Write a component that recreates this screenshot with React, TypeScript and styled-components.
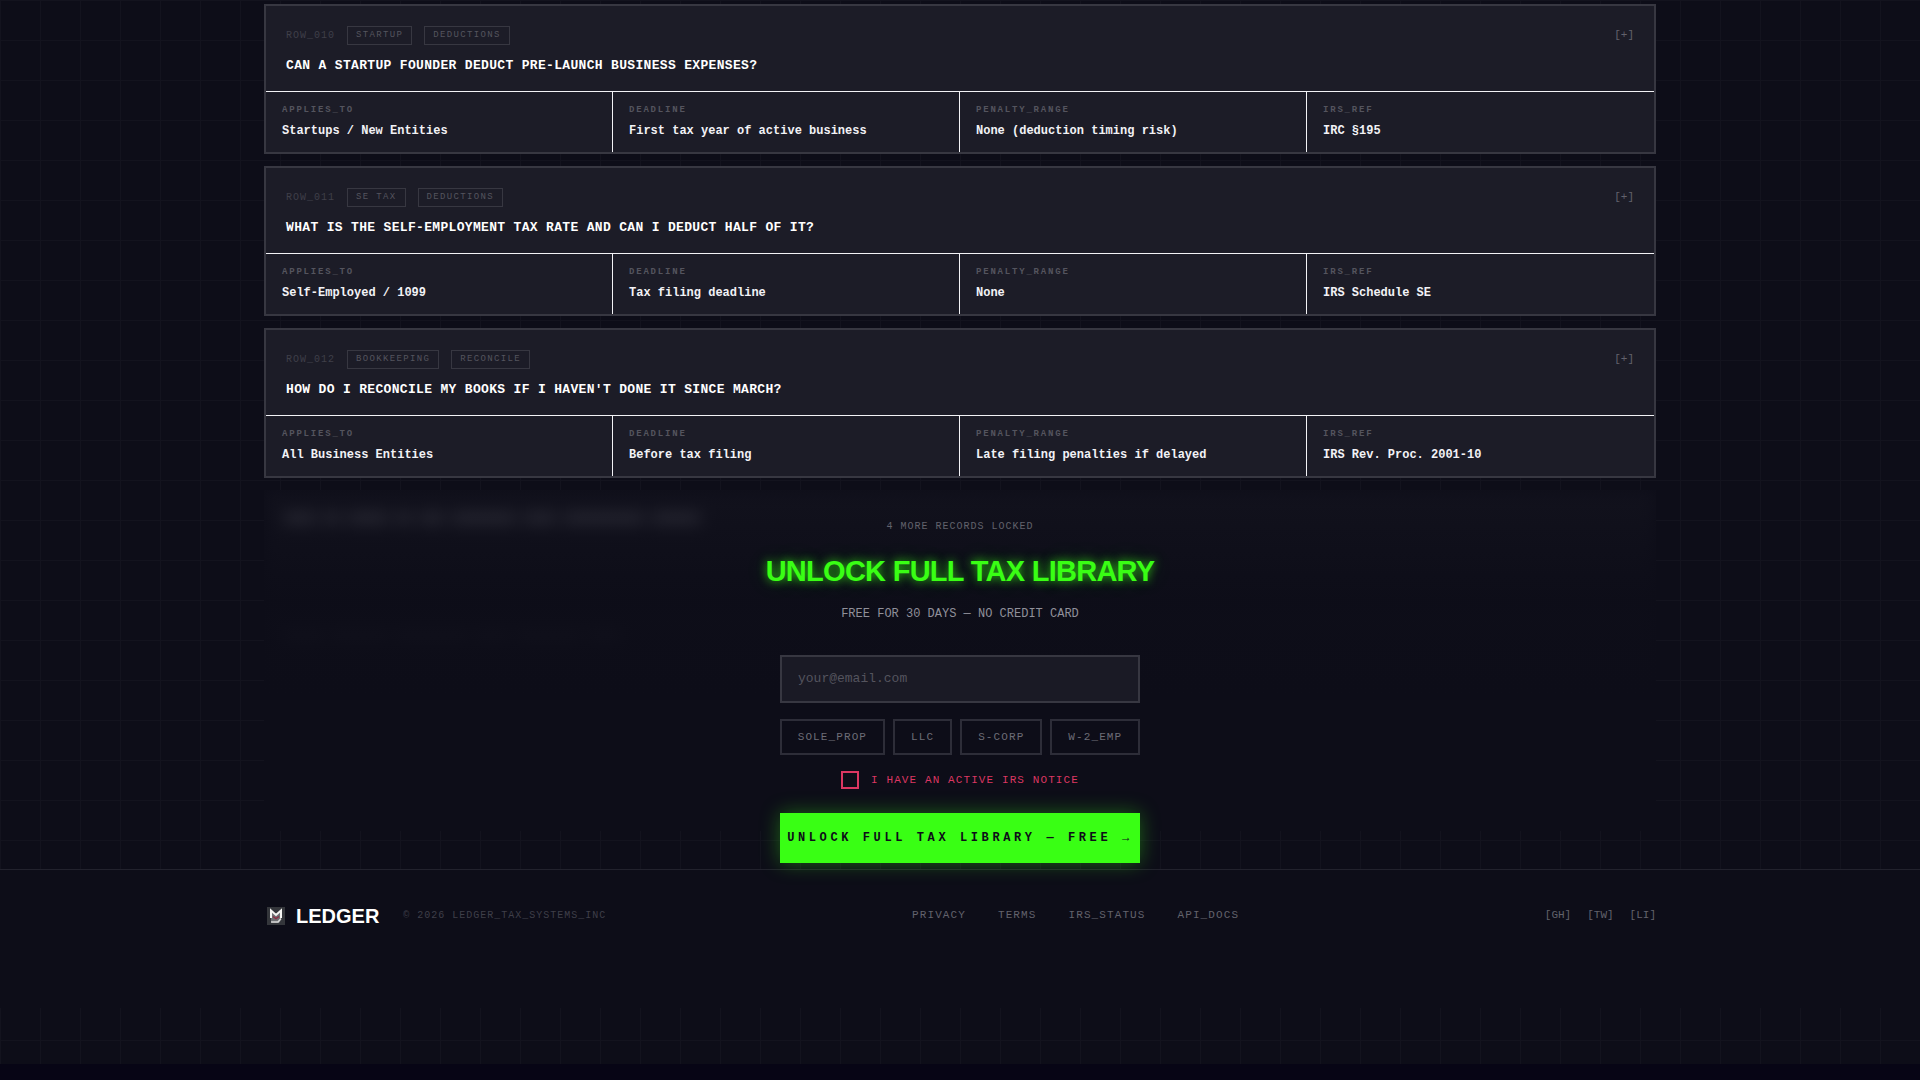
import React from "react";
import styled, { createGlobalStyle } from "styled-components";

const mono = `"Liberation Mono", "Courier New", monospace`;
const sans = `"Liberation Sans", Arial, sans-serif`;

const color = {
  void: "#070515",
  base: "#0d0d18",
  card: "#1c1c27",
  line: "#373741",
  grid: "#13131e",
  rule: "#22222d",
  dim: "#3f3f49",
  muted: "#54545e",
  soft: "#62626c",
  text: "#f2f2f6",
  green: "#39ff14",
  pink: "#dc3762",
};

const GlobalStyle = createGlobalStyle`
  *, *::before, *::after { box-sizing: border-box; }
  body {
    margin: 0;
    background: ${color.void};
    color: ${color.text};
    font-family: ${mono};
  }
  button, input { font-family: inherit; }
  h1, h2, h3, p, dl, dd { margin: 0; }
`;

const Page = styled.div`
  padding: 4px 0 56px;
  background-color: ${color.base};
  background-image: linear-gradient(${color.grid} 1px, transparent 1px),
    linear-gradient(90deg, ${color.grid} 1px, transparent 1px);
  background-size: 40px 40px;
`;

const Container = styled.div`
  width: 100%;
  max-width: 1440px;
  margin: 0 auto;
  padding: 0 24px;
`;

const Records = styled.main`
  display: flex;
  flex-direction: column;
  gap: 12px;
`;

const Card = styled.article`
  border: 2px solid ${color.line};
  background: ${color.card};
`;

const CardHead = styled.header`
  display: flex;
  flex-direction: column;
  gap: 12px;
  padding: 20px 20px 16px;
  border-bottom: 1px solid ${color.text};
`;

const MetaRow = styled.div`
  display: flex;
  align-items: center;
  gap: 12px;
`;

const RowId = styled.span`
  color: ${color.dim};
  font-size: 10px;
  letter-spacing: 0.1em;
`;

const Tag = styled.span`
  padding: 2px 8px;
  border: 1px solid ${color.line};
  color: ${color.muted};
  font-size: 9px;
  line-height: 13px;
  letter-spacing: 0.15em;
`;

const Toggle = styled.button`
  margin-left: auto;
  padding: 0 0 2px;
  border: 0;
  background: none;
  color: ${color.soft};
  font-size: 11px;
  line-height: 16px;
  cursor: pointer;
`;

const Question = styled.h3`
  color: #fff;
  font-size: 13px;
  font-weight: 700;
  line-height: 18px;
  letter-spacing: 0.025em;
`;

const Facts = styled.dl`
  display: grid;
  grid-template-columns: repeat(4, 1fr);
`;

const Fact = styled.div`
  display: flex;
  flex-direction: column;
  gap: 6px;
  padding: 12px 16px;
  border-right: 1px solid ${color.text};

  &:last-child {
    border-right: 0;
  }
`;

const FactLabel = styled.dt`
  color: ${color.muted};
  font-size: 9px;
  font-weight: 700;
  line-height: 12px;
  letter-spacing: 0.2em;
`;

const FactValue = styled.dd`
  font-size: 12px;
  font-weight: 700;
  line-height: 18px;
`;

const Gate = styled.section`
  position: relative;
`;

const LockedStack = styled.div`
  position: absolute;
  inset: 0 0 38px;
  display: flex;
  flex-direction: column;
  gap: 12px;
  overflow: hidden;
  background: ${color.base};
  pointer-events: none;
`;

const LockedRow = styled.div`
  flex: 1;
  display: flex;
  gap: 8px;
  padding: 24px 20px;
  background: ${color.card};
  filter: blur(8px);
`;

const LockedWord = styled.span<{ $chars: number }>`
  width: ${({ $chars }) => $chars * 8}px;
  height: 10px;
  background: #8a8a94;
`;

const Fade = styled.div`
  position: absolute;
  inset: 0;
  background: linear-gradient(rgba(13, 13, 24, 0.7), rgba(13, 13, 24, 0.94) 26%, ${color.base} 60%);
`;

const Offer = styled.form`
  position: relative;
  display: flex;
  flex-direction: column;
  align-items: center;
  width: 100%;
  max-width: 400px;
  margin: 0 auto;
  padding: 28px 20px 6px;
`;

const LockedCount = styled.p`
  color: ${color.soft};
  font-size: 10px;
  line-height: 18px;
  letter-spacing: 0.1em;
`;

const OfferTitle = styled.h2`
  margin-top: 14px;
  color: ${color.green};
  font-family: ${sans};
  font-size: 29px;
  font-weight: 700;
  line-height: 42px;
  letter-spacing: -0.025em;
  white-space: nowrap;
  text-shadow: 0 0 10px rgba(57, 255, 20, 0.8), 0 0 24px rgba(57, 255, 20, 0.2);
`;

const OfferNote = styled.p`
  margin-top: 13px;
  color: #90909a;
  font-size: 12px;
  line-height: 18px;
`;

const EmailInput = styled.input`
  width: 100%;
  height: 48px;
  margin-top: 32px;
  padding: 0 16px 2px;
  border: 2px solid ${color.line};
  border-radius: 0;
  background: #1a1a25;
  color: ${color.text};
  font-size: 13px;
  outline: none;

  &::placeholder {
    color: ${color.muted};
    opacity: 1;
  }
`;

const Entities = styled.div`
  display: flex;
  justify-content: center;
  gap: 8px;
  width: 100%;
  margin-top: 16px;
`;

const EntityButton = styled.button`
  height: 36px;
  padding: 0 16px;
  border: 2px solid #2d2d38;
  background: transparent;
  color: #6c6c76;
  font-size: 11px;
  letter-spacing: 0.1em;
  white-space: nowrap;
  cursor: pointer;
`;

const Notice = styled.label`
  display: flex;
  align-items: center;
  gap: 12px;
  margin-top: 16px;
  color: ${color.pink};
  font-size: 11px;
  line-height: 18px;
  letter-spacing: 0.1em;
  cursor: pointer;
`;

const NoticeBox = styled.input`
  appearance: none;
  width: 18px;
  height: 18px;
  margin: 0;
  border: 2px solid ${color.pink};

  &:checked {
    background: ${color.pink};
  }
`;

const Submit = styled.button`
  width: 100%;
  height: 50px;
  margin-top: 24px;
  padding: 0;
  border: 0;
  background: ${color.green};
  box-shadow: 0 0 20px rgba(57, 255, 20, 0.35);
  color: ${color.base};
  font-size: 12px;
  font-weight: 700;
  letter-spacing: 0.3em;
  white-space: nowrap;
  cursor: pointer;
`;

const Footer = styled.footer`
  padding: 31px 0 79px;
  border-top: 1px solid ${color.rule};
  background: ${color.base};
`;

const FooterRow = styled(Container)`
  display: flex;
  align-items: center;
  justify-content: space-between;
`;

const Brand = styled.div`
  display: flex;
  align-items: center;
  gap: 24px;
`;

const Logo = styled.a`
  display: flex;
  align-items: center;
  gap: 8px;
  padding-top: 2px;
  color: #fff;
  font-family: ${sans};
  font-size: 20px;
  font-weight: 700;
  line-height: 26px;
  text-decoration: none;
`;

const Copyright = styled.span`
  color: ${color.dim};
  font-size: 10px;
  letter-spacing: 0.1em;
`;

const LinkRow = styled.nav<{ $gap: number; $tracking: string }>`
  display: flex;
  gap: ${({ $gap }) => $gap}px;
  font-size: 11px;
  letter-spacing: ${({ $tracking }) => $tracking};
`;

const FooterLink = styled.a`
  color: ${color.soft};
  text-decoration: none;
`;

const LogoMark = () => (
  <svg width="24" height="24" viewBox="0 0 24 24" aria-hidden="true">
    <rect x="3" y="3" width="18" height="18" fill="#34363b" />
    <path d="M7 9h10v7l-2 3H8l-1-2z" fill="#6d6f73" />
    <path d="M7 14V6.500L12 11l5-4.500V14" fill="none" stroke="#f4f4f2" strokeWidth="2" />
    <path d="M9 12.500l3 2 3-2" fill="none" stroke="#8e2e45" strokeWidth="1.500" />
    <path d="M7 18h7l3-3.500" fill="none" stroke="#d9d9d9" strokeWidth="1.500" />
  </svg>
);

const records = [
  {
    id: "ROW_010",
    tags: ["STARTUP", "DEDUCTIONS"],
    question: "CAN A STARTUP FOUNDER DEDUCT PRE-LAUNCH BUSINESS EXPENSES?",
    facts: ["Startups / New Entities", "First tax year of active business", "None (deduction timing risk)", "IRC §195"],
  },
  {
    id: "ROW_011",
    tags: ["SE TAX", "DEDUCTIONS"],
    question: "WHAT IS THE SELF-EMPLOYMENT TAX RATE AND CAN I DEDUCT HALF OF IT?",
    facts: ["Self-Employed / 1099", "Tax filing deadline", "None", "IRS Schedule SE"],
  },
  {
    id: "ROW_012",
    tags: ["BOOKKEEPING", "RECONCILE"],
    question: "HOW DO I RECONCILE MY BOOKS IF I HAVEN'T DONE IT SINCE MARCH?",
    facts: ["All Business Entities", "Before tax filing", "Late filing penalties if delayed", "IRS Rev. Proc. 2001-10"],
  },
];

const factLabels = ["APPLIES_TO", "DEADLINE", "PENALTY_RANGE", "IRS_REF"];
const lockedRows = [
  [4, 2, 5, 2, 3, 8, 4, 10, 6],
  [5, 7, 9, 4, 8, 4],
  [7, 4, 8, 6],
];

export default function App() {
  return (
    <>
      <GlobalStyle />
      <Page>
        <Container>
          <Records>
            {records.map((record) => (
              <Card key={record.id}>
                <CardHead>
                  <MetaRow>
                    <RowId>{record.id}</RowId>
                    {record.tags.map((tag) => (
                      <Tag key={tag}>{tag}</Tag>
                    ))}
                    <Toggle type="button">[+]</Toggle>
                  </MetaRow>
                  <Question>{record.question}</Question>
                </CardHead>
                <Facts>
                  {record.facts.map((value, i) => (
                    <Fact key={factLabels[i]}>
                      <FactLabel>{factLabels[i]}</FactLabel>
                      <FactValue>{value}</FactValue>
                    </Fact>
                  ))}
                </Facts>
              </Card>
            ))}
            <Gate>
              <LockedStack aria-hidden="true">
                {lockedRows.map((words, i) => (
                  <LockedRow key={i}>
                    {words.map((chars, j) => (
                      <LockedWord key={j} $chars={chars} />
                    ))}
                  </LockedRow>
                ))}
                <Fade />
              </LockedStack>
              <Offer onSubmit={(e) => e.preventDefault()}>
                <LockedCount>4 MORE RECORDS LOCKED</LockedCount>
                <OfferTitle>UNLOCK FULL TAX LIBRARY</OfferTitle>
                <OfferNote>FREE FOR 30 DAYS — NO CREDIT CARD</OfferNote>
                <EmailInput type="email" placeholder="your@email.com" aria-label="Email" />
                <Entities>
                  {["SOLE_PROP", "LLC", "S-CORP", "W-2_EMP"].map((entity) => (
                    <EntityButton type="button" key={entity}>
                      {entity}
                    </EntityButton>
                  ))}
                </Entities>
                <Notice>
                  <NoticeBox type="checkbox" />
                  I HAVE AN ACTIVE IRS NOTICE
                </Notice>
                <Submit type="submit">UNLOCK FULL TAX LIBRARY — FREE →</Submit>
              </Offer>
            </Gate>
          </Records>
        </Container>
        <Footer>
          <FooterRow>
            <Brand>
              <Logo href="#">
                <LogoMark />
                LEDGER
              </Logo>
              <Copyright>© 2026 LEDGER_TAX_SYSTEMS_INC</Copyright>
            </Brand>
            <LinkRow $gap={32} $tracking="0.1em">
              {["PRIVACY", "TERMS", "IRS_STATUS", "API_DOCS"].map((label) => (
                <FooterLink href="#" key={label}>
                  {label}
                </FooterLink>
              ))}
            </LinkRow>
            <LinkRow $gap={16} $tracking="0">
              {["[GH]", "[TW]", "[LI]"].map((label) => (
                <FooterLink href="#" key={label}>
                  {label}
                </FooterLink>
              ))}
            </LinkRow>
          </FooterRow>
        </Footer>
      </Page>
    </>
  );
}
